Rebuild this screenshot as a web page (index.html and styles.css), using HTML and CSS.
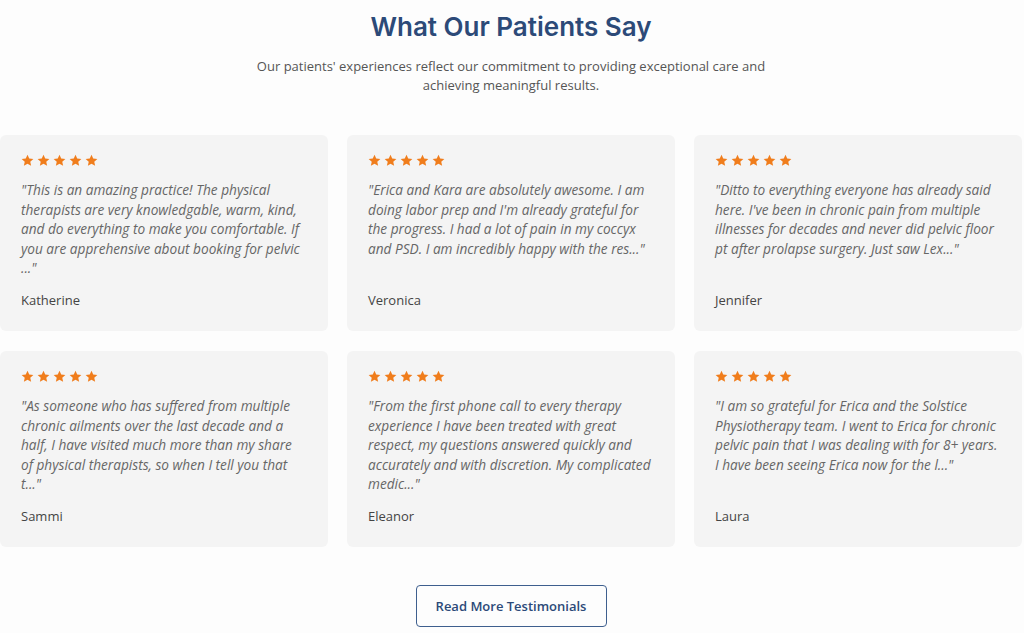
FILE: index.html
```html
<!DOCTYPE html>
<html lang="en">
<head>
  <meta charset="UTF-8" />
  <meta name="viewport" content="width=device-width, initial-scale=1.0" />
  <title>Testimonials</title>
  <link rel="stylesheet" href="styles.css">
</head>
<body>
  <section class="testimonials">
    <h1 class="title">What Our Patients Say</h1>
    <p class="intro">Our patients' experiences reflect our commitment to providing exceptional care and achieving meaningful results.</p>

    <div class="grid">
      <div class="card">
        <div class="stars"><svg viewBox="0 0 24 24"><path d="M12 1.5l3.2 7 7.6.8-5.7 5.1 1.6 7.5L12 18l-6.7 3.9 1.6-7.5-5.7-5.1 7.6-.8z"/></svg><svg viewBox="0 0 24 24"><path d="M12 1.5l3.2 7 7.6.8-5.7 5.1 1.6 7.5L12 18l-6.7 3.9 1.6-7.5-5.7-5.1 7.6-.8z"/></svg><svg viewBox="0 0 24 24"><path d="M12 1.5l3.2 7 7.6.8-5.7 5.1 1.6 7.5L12 18l-6.7 3.9 1.6-7.5-5.7-5.1 7.6-.8z"/></svg><svg viewBox="0 0 24 24"><path d="M12 1.5l3.2 7 7.6.8-5.7 5.1 1.6 7.5L12 18l-6.7 3.9 1.6-7.5-5.7-5.1 7.6-.8z"/></svg><svg viewBox="0 0 24 24"><path d="M12 1.5l3.2 7 7.6.8-5.7 5.1 1.6 7.5L12 18l-6.7 3.9 1.6-7.5-5.7-5.1 7.6-.8z"/></svg></div>
        <p class="quote">"This is an amazing practice! The physical therapists are very knowledgable, warm, kind, and do everything to make you comfortable. If you are apprehensive about booking for pelvic ..."</p>
        <p class="name">Katherine</p>
      </div>
      <div class="card">
        <div class="stars"><svg viewBox="0 0 24 24"><path d="M12 1.5l3.2 7 7.6.8-5.7 5.1 1.6 7.5L12 18l-6.7 3.9 1.6-7.5-5.7-5.1 7.6-.8z"/></svg><svg viewBox="0 0 24 24"><path d="M12 1.5l3.2 7 7.6.8-5.7 5.1 1.6 7.5L12 18l-6.7 3.9 1.6-7.5-5.7-5.1 7.6-.8z"/></svg><svg viewBox="0 0 24 24"><path d="M12 1.5l3.2 7 7.6.8-5.7 5.1 1.6 7.5L12 18l-6.7 3.9 1.6-7.5-5.7-5.1 7.6-.8z"/></svg><svg viewBox="0 0 24 24"><path d="M12 1.5l3.2 7 7.6.8-5.7 5.1 1.6 7.5L12 18l-6.7 3.9 1.6-7.5-5.7-5.1 7.6-.8z"/></svg><svg viewBox="0 0 24 24"><path d="M12 1.5l3.2 7 7.6.8-5.7 5.1 1.6 7.5L12 18l-6.7 3.9 1.6-7.5-5.7-5.1 7.6-.8z"/></svg></div>
        <p class="quote">"Erica and Kara are absolutely awesome. I am doing labor prep and I'm already grateful for the progress. I had a lot of pain in my coccyx and PSD. I am incredibly happy with the res..."</p>
        <p class="name">Veronica</p>
      </div>
      <div class="card">
        <div class="stars"><svg viewBox="0 0 24 24"><path d="M12 1.5l3.2 7 7.6.8-5.7 5.1 1.6 7.5L12 18l-6.7 3.9 1.6-7.5-5.7-5.1 7.6-.8z"/></svg><svg viewBox="0 0 24 24"><path d="M12 1.5l3.2 7 7.6.8-5.7 5.1 1.6 7.5L12 18l-6.7 3.9 1.6-7.5-5.7-5.1 7.6-.8z"/></svg><svg viewBox="0 0 24 24"><path d="M12 1.5l3.2 7 7.6.8-5.7 5.1 1.6 7.5L12 18l-6.7 3.9 1.6-7.5-5.7-5.1 7.6-.8z"/></svg><svg viewBox="0 0 24 24"><path d="M12 1.5l3.2 7 7.6.8-5.7 5.1 1.6 7.5L12 18l-6.7 3.9 1.6-7.5-5.7-5.1 7.6-.8z"/></svg><svg viewBox="0 0 24 24"><path d="M12 1.5l3.2 7 7.6.8-5.7 5.1 1.6 7.5L12 18l-6.7 3.9 1.6-7.5-5.7-5.1 7.6-.8z"/></svg></div>
        <p class="quote">"Ditto to everything everyone has already said here. I've been in chronic pain from multiple illnesses for decades and never did pelvic floor pt after prolapse surgery. Just saw Lex..."</p>
        <p class="name">Jennifer</p>
      </div>
      <div class="card">
        <div class="stars"><svg viewBox="0 0 24 24"><path d="M12 1.5l3.2 7 7.6.8-5.7 5.1 1.6 7.5L12 18l-6.7 3.9 1.6-7.5-5.7-5.1 7.6-.8z"/></svg><svg viewBox="0 0 24 24"><path d="M12 1.5l3.2 7 7.6.8-5.7 5.1 1.6 7.5L12 18l-6.7 3.9 1.6-7.5-5.7-5.1 7.6-.8z"/></svg><svg viewBox="0 0 24 24"><path d="M12 1.5l3.2 7 7.6.8-5.7 5.1 1.6 7.5L12 18l-6.7 3.9 1.6-7.5-5.7-5.1 7.6-.8z"/></svg><svg viewBox="0 0 24 24"><path d="M12 1.5l3.2 7 7.6.8-5.7 5.1 1.6 7.5L12 18l-6.7 3.9 1.6-7.5-5.7-5.1 7.6-.8z"/></svg><svg viewBox="0 0 24 24"><path d="M12 1.5l3.2 7 7.6.8-5.7 5.1 1.6 7.5L12 18l-6.7 3.9 1.6-7.5-5.7-5.1 7.6-.8z"/></svg></div>
        <p class="quote">"As someone who has suffered from multiple chronic ailments over the last decade and a half, I have visited much more than my share of physical therapists, so when I tell you that t..."</p>
        <p class="name">Sammi</p>
      </div>
      <div class="card">
        <div class="stars"><svg viewBox="0 0 24 24"><path d="M12 1.5l3.2 7 7.6.8-5.7 5.1 1.6 7.5L12 18l-6.7 3.9 1.6-7.5-5.7-5.1 7.6-.8z"/></svg><svg viewBox="0 0 24 24"><path d="M12 1.5l3.2 7 7.6.8-5.7 5.1 1.6 7.5L12 18l-6.7 3.9 1.6-7.5-5.7-5.1 7.6-.8z"/></svg><svg viewBox="0 0 24 24"><path d="M12 1.5l3.2 7 7.6.8-5.7 5.1 1.6 7.5L12 18l-6.7 3.9 1.6-7.5-5.7-5.1 7.6-.8z"/></svg><svg viewBox="0 0 24 24"><path d="M12 1.5l3.2 7 7.6.8-5.7 5.1 1.6 7.5L12 18l-6.7 3.9 1.6-7.5-5.7-5.1 7.6-.8z"/></svg><svg viewBox="0 0 24 24"><path d="M12 1.5l3.2 7 7.6.8-5.7 5.1 1.6 7.5L12 18l-6.7 3.9 1.6-7.5-5.7-5.1 7.6-.8z"/></svg></div>
        <p class="quote">"From the first phone call to every therapy experience I have been treated with great respect, my questions answered quickly and accurately and with discretion. My complicated medic..."</p>
        <p class="name">Eleanor</p>
      </div>
      <div class="card">
        <div class="stars"><svg viewBox="0 0 24 24"><path d="M12 1.5l3.2 7 7.6.8-5.7 5.1 1.6 7.5L12 18l-6.7 3.9 1.6-7.5-5.7-5.1 7.6-.8z"/></svg><svg viewBox="0 0 24 24"><path d="M12 1.5l3.2 7 7.6.8-5.7 5.1 1.6 7.5L12 18l-6.7 3.9 1.6-7.5-5.7-5.1 7.6-.8z"/></svg><svg viewBox="0 0 24 24"><path d="M12 1.5l3.2 7 7.6.8-5.7 5.1 1.6 7.5L12 18l-6.7 3.9 1.6-7.5-5.7-5.1 7.6-.8z"/></svg><svg viewBox="0 0 24 24"><path d="M12 1.5l3.2 7 7.6.8-5.7 5.1 1.6 7.5L12 18l-6.7 3.9 1.6-7.5-5.7-5.1 7.6-.8z"/></svg><svg viewBox="0 0 24 24"><path d="M12 1.5l3.2 7 7.6.8-5.7 5.1 1.6 7.5L12 18l-6.7 3.9 1.6-7.5-5.7-5.1 7.6-.8z"/></svg></div>
        <p class="quote">"I am so grateful for Erica and the Solstice Physiotherapy team. I went to Erica for chronic pelvic pain that I was dealing with for 8+ years. I have been seeing Erica now for the l..."</p>
        <p class="name">Laura</p>
      </div>
    </div>

    <div class="more">
      <a class="more-btn" href="#">Read More Testimonials</a>
    </div>
  </section>
</body>
</html>
```

FILE: styles.css
```css
body {
  margin: 0;
  background-color: #fdfdfd;
  font-family: "Open Sans", Arial, sans-serif;
  color: #444;
}

.testimonials {
  width: 1022px;
  padding-top: 12px;
}

.title {
  margin: 0;
  text-align: center;
  font-family: Inter, "Open Sans", sans-serif;
  font-weight: 600;
  font-size: 26px;
  line-height: 30px;
  color: #2c4a78;
}

.intro {
  width: 530px;
  margin: 15px auto 0;
  text-align: center;
  font-size: 13px;
  line-height: 19px;
  color: #555;
}

.grid {
  display: grid;
  grid-template-columns: repeat(3, 328px);
  column-gap: 19px;
  row-gap: 20px;
  margin-top: 40px;
}

.card {
  display: flex;
  flex-direction: column;
  height: 196px;
  box-sizing: border-box;
  padding: 19px 21px 21px 21px;
  background-color: #f4f4f4;
  border-radius: 6px;
}

.stars {
  display: flex;
  gap: 3px;
  height: 14px;
}

.stars svg {
  width: 13px;
  height: 13px;
  fill: #f07d1c;
}

.quote {
  margin: 12px 0 0;
  font-style: italic;
  font-size: 13.65px;
  line-height: 19.5px;
  color: #666;
}

.name {
  margin: auto 0 0;
  font-size: 13px;
  line-height: 20px;
  color: #444;
}

.more {
  display: flex;
  justify-content: center;
  margin-top: 38px;
}

.more-btn {
  display: block;
  width: 191px;
  height: 42px;
  box-sizing: border-box;
  border: 1px solid #3e5f8e;
  border-radius: 4px;
  text-align: center;
  line-height: 40px;
  font-size: 13px;
  font-weight: 600;
  color: #2c4a78;
  text-decoration: none;
}
```
